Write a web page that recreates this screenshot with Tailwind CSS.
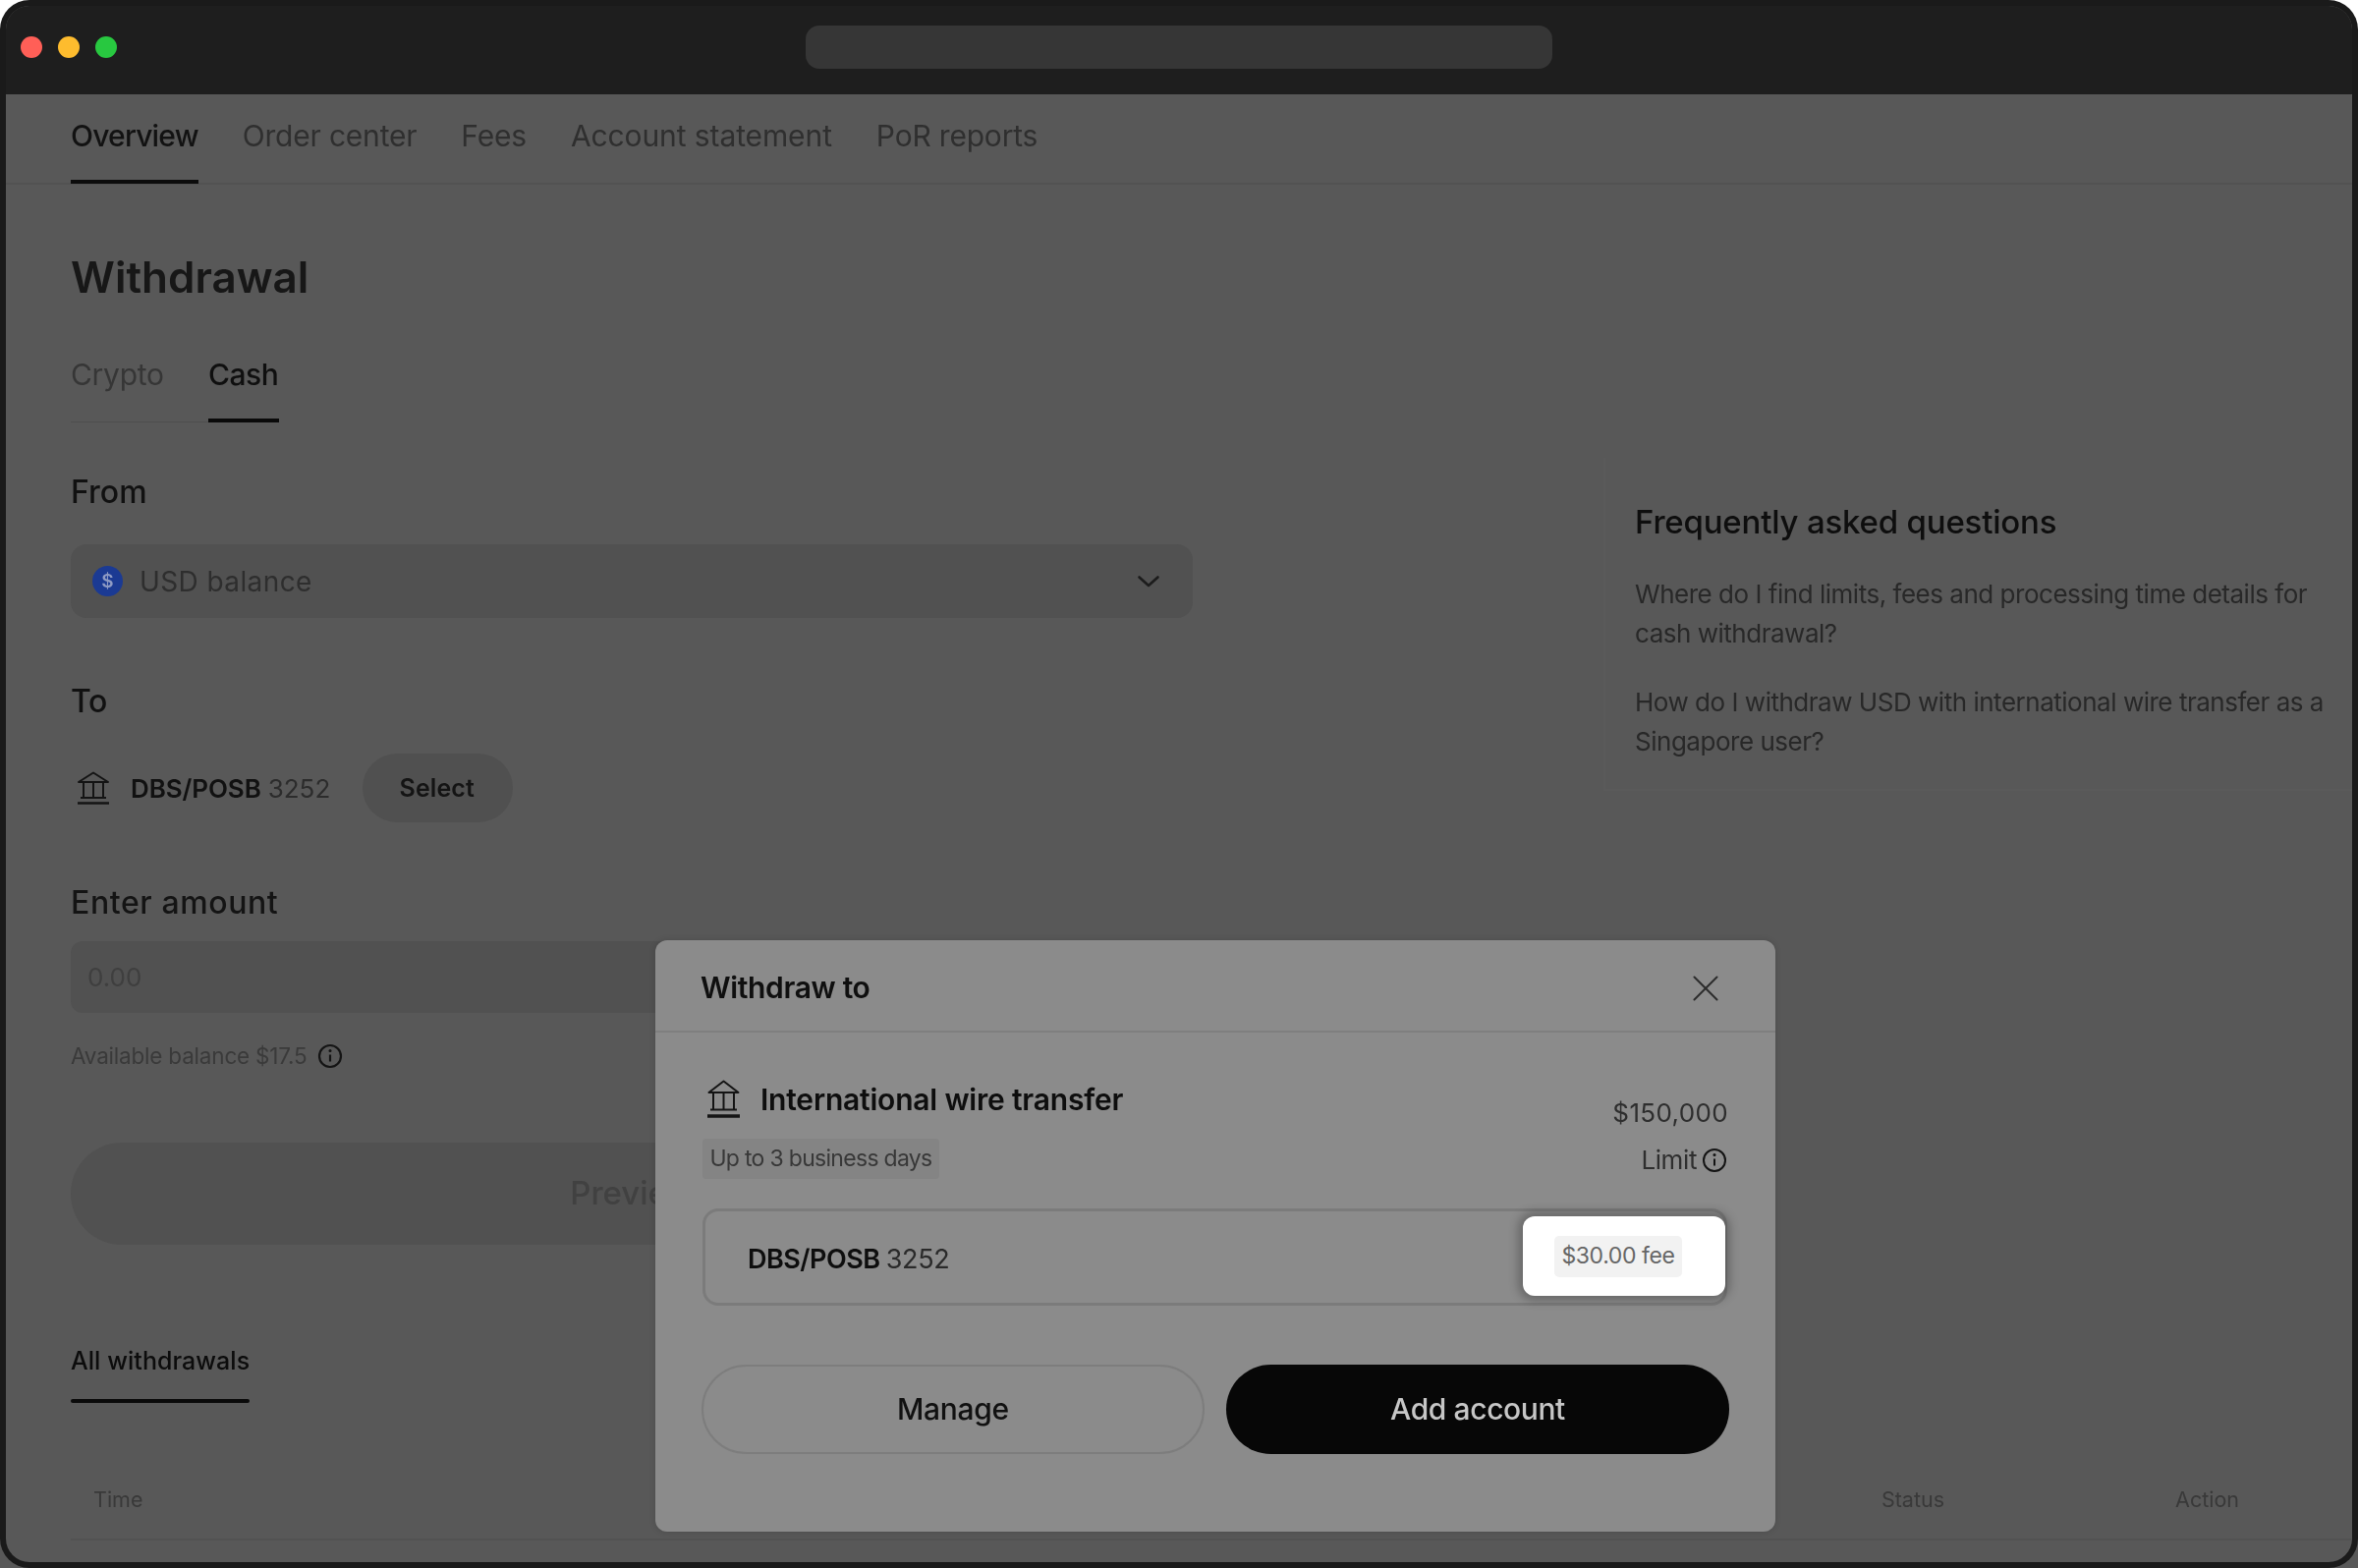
<!DOCTYPE html>
<html>
<head>
<meta charset="utf-8">
<title>Withdraw</title>
<script src="https://cdn.jsdelivr.net/npm/@tailwindcss/browser@4"></script>
</head>
<body class="m-0 bg-[linear-gradient(#ffffff_50%,#585858_50%)]">
<div class="relative h-[1596px] w-[2400px] overflow-hidden rounded-[30px] bg-[#1a1a1a] p-[6px] font-['Inter','Liberation_Sans',sans-serif] blur-[0.5px]">
  <div class="flex h-full flex-col overflow-hidden rounded-[24px] bg-[#585858] text-[#111]">
    <!-- Title bar -->
    <div class="relative flex h-[90px] shrink-0 items-start bg-[#1e1e1e]">
      <div class="mt-[31px] ml-[15px] flex gap-[16px]">
        <span class="h-[22px] w-[22px] rounded-full bg-[#ff5f57]"></span>
        <span class="h-[22px] w-[22px] rounded-full bg-[#febc2e]"></span>
        <span class="h-[22px] w-[22px] rounded-full bg-[#28c840]"></span>
      </div>
      <div class="mt-[20px] ml-[701px] h-[44px] w-[760px] rounded-[14px] bg-[#363636]"></div>
    </div>

    <!-- Nav -->
    <div class="flex h-[92px] shrink-0 items-start gap-[45px] border-b-2 border-[#525252] pl-[66px] text-[30px] tracking-[-0.2px] text-[#2f2f2f]">
      <div class="flex h-[91px] flex-col justify-between pt-[21px] font-medium tracking-[-0.8px] text-[#121212]">
        <span class="leading-[42px]">Overview</span>
        <span class="h-[4px] bg-[#0c0c0c]"></span>
      </div>
      <span class="pt-[21px] leading-[42px]">Order center</span>
      <span class="pt-[21px] leading-[42px]">Fees</span>
      <span class="pt-[21px] leading-[42px] tracking-[-0.1px]">Account statement</span>
      <span class="pt-[21px] leading-[42px]">PoR reports</span>
    </div>

    <!-- Main -->
    <div class="flex flex-1 pl-[66px]">
      <div class="w-[1142px] shrink-0">
        <h1 class="mt-[66px] text-[44px] leading-[56px] font-semibold text-[#171717]">Withdrawal</h1>
        <div class="mt-[50px] flex text-[30px] leading-[42px] tracking-[-0.5px]">
          <div class="flex w-[140px] flex-col">
            <span class="h-[69px] tracking-[-0.3px] text-[#363636]">Crypto</span>
            <span class="h-[1px] bg-[#4e4e4e]"></span>
          </div>
          <div class="flex w-[72px] flex-col font-medium text-[#0f0f0f]">
            <span class="h-[66px]">Cash</span>
            <span class="h-[4px] bg-[#0a0a0a]"></span>
          </div>
        </div>

        <div class="mt-[50px] text-[32px] leading-[42px] font-medium text-[#111]">From</div>
        <div class="mt-[32px] flex h-[75px] items-center rounded-[16px] bg-[#515151] pr-[33px] pl-[22px]">
          <svg class="h-[31px] w-[31px]" viewBox="0 0 31 31"><circle cx="15.5" cy="15.5" r="15.5" fill="#1b3a93"/><text x="15.5" y="22" text-anchor="middle" font-size="19" font-weight="600" fill="#8f9bc4">$</text></svg>
          <span class="ml-[17px] text-[28px] tracking-[0.4px] text-[#2e2e2e]">USD balance</span>
          <svg class="ml-auto h-[24px] w-[24px]" viewBox="0 0 24 24" fill="none" stroke="#1c1c1c" stroke-width="2.6" stroke-linecap="round" stroke-linejoin="round"><path d="M2.5 7.5L12 16l9.500-8.500"/></svg>
        </div>

        <div class="mt-[64px] text-[32px] leading-[42px] font-medium tracking-[-0.5px] text-[#111]">To</div>
        <div class="mt-[32px] flex items-center">
          <svg class="ml-[6px] h-[34px] w-[34px]" viewBox="0 0 34 34" fill="none" stroke="#141414" stroke-width="2"><path d="M2 11L17 1.500 32 11z" stroke-linejoin="round"/><path d="M7 11v16M17 11v16M27 11v16M4 27h26"/><path d="M1 32.500h32" stroke-width="2.500"/></svg>
          <span class="ml-[21px] text-[26px] font-semibold tracking-[-0.1px] text-[#111]">DBS/POSB</span>
          <span class="ml-[7px] text-[26px] text-[#2c2c2c]">3252</span>
          <span class="ml-[33px] flex h-[70px] w-[153px] items-center justify-center rounded-full bg-[#505050] pt-[2px] pr-[2px] text-[25px] font-semibold tracking-[0.1px] text-[#141414]">Select</span>
        </div>

        <div class="mt-[61px] text-[32px] leading-[42px] font-medium tracking-[0.6px] text-[#141414]">Enter amount</div>
        <div class="mt-[18px] flex h-[73px] items-center rounded-[12px] bg-[#515151] pl-[17px] text-[26px] text-[#3f3f3f]">0.00</div>
        <div class="mt-[29px] flex items-center text-[22.5px] leading-[30px] tracking-[-0.2px] text-[#3a3a3a]">
          <span>Available balance $17.5</span>
          <svg class="ml-[11px] h-[26px] w-[26px]" viewBox="0 0 26 26" fill="none" stroke="#141414" stroke-width="2.200"><circle cx="13" cy="13" r="11"/><path d="M13 11.500v7"/><circle cx="13" cy="7.500" r="1.500" fill="#141414" stroke="none"/></svg>
        </div>
        <div class="mt-[73px] flex h-[104px] items-center justify-center rounded-full bg-[#515151] text-[33px] font-medium text-[#414141]">Preview</div>

        <div class="mt-[99px] flex w-[182px] flex-col">
          <span class="text-[25px] leading-[38px] font-medium tracking-[0.05px] whitespace-nowrap text-[#0c0c0c]">All withdrawals</span>
          <span class="mt-[20px] h-[4px] rounded-full bg-[#0a0a0a]"></span>
        </div>
      </div>

      <!-- FAQ -->
      <div class="ml-[418px] flex-1">
        <div class="mt-[278px] h-[339px] border-b-2 border-l-2 border-[#5a5a5a] pt-[43px] pl-[30px]">
          <div class="text-[33px] leading-[44px] font-medium tracking-[-0.2px] text-[#0e0e0e]">Frequently asked questions</div>
          <p class="mt-[32px] text-[26px] leading-[40px] tracking-[-0.48px] text-[#282828]">Where do I find limits, fees and processing time details for<br>cash withdrawal?</p>
          <p class="mt-[30px] text-[26px] leading-[40px] tracking-[-0.48px] whitespace-nowrap text-[#282828]">How do I withdraw USD with international wire transfer as a<br>Singapore user?</p>
        </div>
      </div>
    </div>

    <!-- Table header -->
    <div class="absolute top-[1503px] right-[6px] left-[72px]">
      <div class="flex h-[65px] items-start border-b-2 border-[#525252] pt-[7px] text-[21.5px] leading-[32px] text-[#393939]">
        <span class="ml-[23px]">Time</span>
        <span class="mr-[235px] ml-auto">Status</span>
        <span class="mr-[115px]">Action</span>
      </div>
    </div>
  </div>

  <!-- Modal -->
  <div class="absolute top-[957px] left-[667px] h-[602px] w-[1140px] rounded-[12px] bg-[#8b8b8b] shadow-[0_0_6px_rgba(0,0,0,0.15)]">
    <div class="flex h-[94px] items-center justify-between border-b-2 border-[#7f7f7f] pt-[5px] pr-[58px] pl-[46px]">
      <span class="text-[30px] font-semibold tracking-[-0.35px] text-[#0f0f0f]">Withdraw to</span>
      <svg class="h-[26px] w-[26px]" viewBox="0 0 26 26" stroke="#2c2c2c" stroke-width="2" stroke-linecap="round"><path d="M1.500 1.500l23 23M24.500 1.500l-23 23"/></svg>
    </div>
    <div class="pt-[48px] pr-[47px] pl-[48px]">
      <div class="mr-[1px] flex justify-between">
        <div>
          <div class="flex items-center">
            <svg class="ml-[5px] h-[39px] w-[33px]" viewBox="0 0 33 39" fill="none" stroke="#141414" stroke-width="2"><path d="M1.500 13L16.500 1.500 31.500 13z" stroke-linejoin="round"/><path d="M6 13v17M16.500 13v17M27 13v17M3 30.500h27"/><path d="M0 37h33" stroke-width="3.500"/></svg>
            <span class="ml-[21px] text-[30px] leading-[38px] font-semibold tracking-[-0.2px] text-[#0e0e0e]">International wire transfer</span>
          </div>
          <span class="mt-[21px] flex h-[41px] w-[241px] items-center justify-center rounded-[4px] bg-[#848484] text-[23px] tracking-[-0.7px] whitespace-nowrap text-[#383838]">Up to 3 business days</span>
        </div>
        <div class="flex flex-col items-end pt-[16px]">
          <span class="text-[26px] leading-[36px] tracking-[0.35px] text-[#2e2e2e]">$150,000</span>
          <div class="mt-[12px] mr-[1px] flex items-center gap-[5px] text-[26px] leading-[36px] tracking-[-0.4px] text-[#2e2e2e]">
            <span>Limit</span>
            <svg class="h-[26px] w-[26px]" viewBox="0 0 26 26" fill="none" stroke="#141414" stroke-width="2"><circle cx="13" cy="13" r="11"/><path d="M13 11.500v7"/><circle cx="13" cy="7.500" r="1.500" fill="#141414" stroke="none"/></svg>
          </div>
        </div>
      </div>
      <div class="relative mt-[30px] flex h-[99px] w-[1043px] items-center rounded-[16px] border-[3px] border-[#7b7b7b] pt-[6px] pl-[43px] text-[27px]">
        <span class="font-semibold tracking-[-0.5px] text-[#0e0e0e]">DBS/POSB</span>
        <span class="ml-[6px] tracking-[-0.3px] text-[#2a2a2a]">3252</span>
        <div class="absolute top-[5px] right-[-1px] flex h-[81px] w-[206px] items-center rounded-[12px] bg-white pl-[32px] shadow-[0_0_10px_5px_rgba(0,0,0,0.25)]">
          <span class="flex h-[42px] w-[130px] items-center justify-center rounded-[5px] bg-[#f2f2f2] text-[23px] tracking-[-0.4px] whitespace-nowrap text-[#666]">$30.00 fee</span>
        </div>
      </div>
      <div class="mt-[60px] flex justify-between">
        <span class="-ml-[1px] flex h-[91px] w-[512px] items-center justify-center rounded-full border-2 border-[#7d7d7d] text-[30px] font-medium tracking-[-0.3px] text-[#111]">Manage</span>
        <span class="flex h-[91px] w-[512px] items-center justify-center rounded-full bg-[#070707] text-[30px] font-medium tracking-[-0.4px] text-[#c6c6c6]">Add account</span>
      </div>
    </div>
  </div>
</div>
</body>
</html>
